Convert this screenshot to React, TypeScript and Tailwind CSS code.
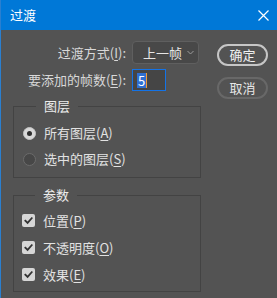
import React, { useState } from 'react'

const font = { fontFamily: '"Noto Sans CJK SC", "Noto Sans", sans-serif' }

function Key({ k }: { k: string }) {
  return (
    <span>
      (<span className="underline underline-offset-2">{k}</span>)
    </span>
  )
}

function Radio({ checked, label, k }: { checked: boolean; label: string; k: string }) {
  return (
    <div className="flex items-center h-[26px] gap-[8px]">
      {checked ? (
        <span className="w-[13px] h-[13px] rounded-full bg-[#d9d9d9] border border-[#c4c4c4] flex items-center justify-center">
          <span className="w-[5px] h-[5px] rounded-full bg-[#2e2e2e]" />
        </span>
      ) : (
        <span className="w-[13px] h-[13px] rounded-full bg-[#474747] border border-[#6b6b6b]" />
      )}
      <span className="text-[13px] text-[#e2e2e2]">
        {label}
        <Key k={k} />
      </span>
    </div>
  )
}

function Check({ label, k }: { label: string; k: string }) {
  return (
    <div className="flex items-center h-[27px] gap-[8px]">
      <span className="w-[13px] h-[13px] rounded-[2px] bg-[#d6d6d6] flex items-center justify-center">
        <svg className="w-[9px] h-[9px]" viewBox="0 0 10 10" fill="none" stroke="#333" strokeWidth={2}>
          <path d="M1.5 5.2 L4 7.6 L8.6 2.4" strokeLinecap="square" />
        </svg>
      </span>
      <span className="text-[13px] text-[#e2e2e2]">
        {label}
        <Key k={k} />
      </span>
    </div>
  )
}

export default function App() {
  const [frames] = useState('5')

  return (
    <div style={font} className="w-[277px] h-[298px] bg-[#535353] border-l border-[#2a7fd0] flex flex-col overflow-hidden">
      {/* title bar */}
      <div className="h-[30px] bg-[#0078d7] flex items-center justify-between pl-[9px] pr-[8px] shrink-0">
        <span className="text-[13px] text-white">过渡</span>
        <svg className="w-[11px] h-[11px]" viewBox="0 0 11 11" stroke="white" strokeWidth={1.2}>
          <path d="M0.5 0.5 L10.5 10.5 M10.5 0.5 L0.5 10.5" />
        </svg>
      </div>

      <div className="flex pl-[12px] pt-[11px]">
        {/* left column */}
        <div className="w-[188px] flex flex-col">
          <div className="flex items-center gap-[6px]">
            <span className="w-[113px] text-right text-[13px] text-[#d8d8d8] whitespace-nowrap">
              过渡方式<Key k="I" />:
            </span>
            <div className="w-[67px] h-[23px] rounded-[4px] bg-[#484848] border border-[#5f5f5f] flex items-center justify-between pl-[10px] pr-[4px]">
              <span className="text-[13px] text-[#e6e6e6]">上一帧</span>
              <svg className="w-[7px] h-[5px]" viewBox="0 0 7 5" fill="none" stroke="#9a9a9a" strokeWidth={1}>
                <path d="M0.5 1 L3.5 4 L6.5 1" />
              </svg>
            </div>
          </div>

          <div className="flex items-center gap-[6px] mt-[5px]">
            <span className="w-[113px] text-right text-[13px] text-[#d8d8d8] whitespace-nowrap">
              要添加的帧数<Key k="E" />:
            </span>
            <div className="w-[34px] h-[22px] bg-[#454545] border border-[#1473e6] flex items-center pl-[4px]">
              <span className="bg-[#2f6fd1] text-white text-[13px] leading-[15px] px-[1px]">{frames}</span>
              <span className="w-[1px] h-[15px] bg-[#f29c38]" />
            </div>
          </div>

          <fieldset className="border border-[#434343] mt-[6px] pl-[9px] pt-[5px] pb-[5px]">
            <legend className="ml-[13px] px-[8px] text-[13px] leading-[18px] text-[#ececec]">图层</legend>
            <Radio checked label="所有图层" k="A" />
            <Radio checked={false} label="选中的图层" k="S" />
          </fieldset>

          <fieldset className="border border-[#434343] mt-[8px] pl-[8px] pt-[3px] pb-[3px]">
            <legend className="ml-[13px] px-[8px] text-[13px] leading-[18px] text-[#ececec]">参数</legend>
            <Check label="位置" k="P" />
            <Check label="不透明度" k="O" />
            <Check label="效果" k="E" />
          </fieldset>
        </div>

        {/* buttons */}
        <div className="flex flex-col gap-[11px] ml-[16px] pt-[3px]">
          <button className="w-[51px] h-[22px] rounded-full border-2 border-[#c6c6c6] text-[13px] text-[#f0f0f0] flex items-center justify-center">
            确定
          </button>
          <button className="w-[51px] h-[22px] rounded-full border-2 border-[#686868] text-[13px] text-[#e6e6e6] flex items-center justify-center">
            取消
          </button>
        </div>
      </div>
    </div>
  )
}
